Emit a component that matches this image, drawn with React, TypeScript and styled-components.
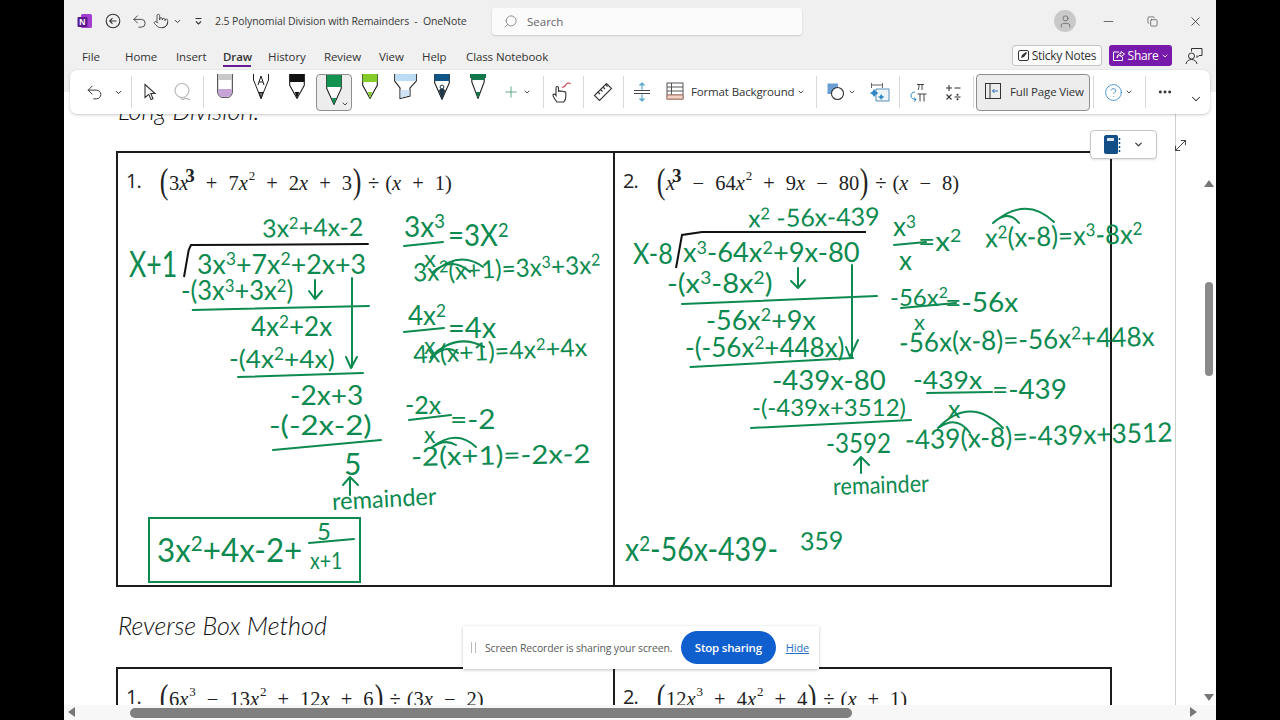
import React from 'react';
import styled, { createGlobalStyle } from 'styled-components';
import { ChevronDown, Minus, Copy, X, Search, MoreHorizontal, Plus, Pointer, Undo2, CircleHelp, User, MoveDiagonal } from 'lucide-react';

const INK = '#0d8a50';
const HEADER_H = 92;

const GlobalStyle = createGlobalStyle`
  html, body { margin: 0; padding: 0; background: #000; }
  body { font-family: "Open Sans", "Liberation Sans", sans-serif; }
  * { box-sizing: border-box; }
`;

const Stage = styled.div`
  width: 1280px;
  height: 720px;
  padding: 0 64px;
  background: #000;
  overflow: hidden;
`;

const Window = styled.div`
  position: relative;
  width: 1152px;
  height: 720px;
  display: flex;
  flex-direction: column;
  background: #fff;
  overflow: hidden;
`;

const Header = styled.header`
  height: ${HEADER_H}px;
  flex: none;
  background: #f0f0f0;
`;

const TitleBar = styled.div`
  height: 42px;
  display: flex;
  align-items: center;
  padding-left: 13px;
  color: #333;
`;

const Slot = styled.div<{ $w: number; $ml?: number }>`
  width: ${p => p.$w}px;
  margin-left: ${p => p.$ml || 0}px;
  flex: none;
  display: flex;
  align-items: center;
  justify-content: center;
`;

const DocTitle = styled.div`
  width: 280px;
  padding-left: 3px;
  font-size: 10.5px;
  color: #3a3a3a;
  letter-spacing: -0.1px;
  white-space: nowrap;
`;

const SearchBox = styled.div`
  width: 310px;
  height: 27px;
  display: flex;
  align-items: center;
  gap: 9px;
  padding-left: 11px;
  background: #fbfbfb;
  border-radius: 3px;
  box-shadow: 0 1px 2px rgba(0, 0, 0, 0.16);
  font-size: 11.5px;
  color: #666;
`;

const Avatar = styled.div`
  width: 22px;
  height: 22px;
  margin: 0 10px 0 auto;
  border-radius: 50%;
  background: #c9c9c9;
  display: flex;
  align-items: center;
  justify-content: center;
  color: #6a6a6a;
`;

const TabBar = styled.div`
  height: 28px;
  display: flex;
  align-items: center;
  padding-left: 18px;
`;

const Tab = styled.div<{ $w: number; $active?: boolean }>`
  position: relative;
  width: ${p => p.$w}px;
  flex: none;
  font-size: 11.5px;
  letter-spacing: -0.1px;
  font-weight: ${p => (p.$active ? 600 : 400)};
  color: #333;
  white-space: nowrap;
  ${p =>
    p.$active &&
    `&::after { content: ""; position: absolute; left: 0; width: 28px; bottom: -3px; height: 2px; background: #6a1b9a; }`}
`;

const StickyButton = styled.button`
  width: 90px;
  height: 21px;
  margin: -1px 7px 0 auto;
  padding: 0;
  display: flex;
  align-items: center;
  justify-content: center;
  gap: 3px;
  border: 1px solid #c4c4c4;
  border-radius: 3px;
  background: #fbfbfb;
  font: 12px "Open Sans", sans-serif;
  letter-spacing: -0.3px;
  color: #333;
`;

const ShareButton = styled.button`
  width: 63px;
  height: 21px;
  margin-top: -1px;
  padding: 0;
  display: flex;
  align-items: center;
  justify-content: center;
  gap: 3px;
  border: none;
  border-radius: 3px;
  background: #7719aa;
  font: 12px "Open Sans", sans-serif;
  letter-spacing: -0.3px;
  color: #fff;
`;

const Ribbon = styled.div`
  position: absolute;
  top: 70px;
  left: 6px;
  right: 6px;
  height: 44px;
  padding-left: 10px;
  display: flex;
  align-items: center;
  background: #fff;
  border-radius: 7px;
  box-shadow: 0 1px 3px rgba(0, 0, 0, 0.22);
  z-index: 5;
`;

const Tool = styled.div<{ $w: number; $selected?: boolean }>`
  position: relative;
  width: ${p => p.$w}px;
  height: 37px;
  flex: none;
  display: flex;
  align-items: center;
  justify-content: center;
  color: #333;
  ${p => p.$selected && `background: #ededed; border: 1px solid #8f8f8f; border-radius: 4px;`}
`;

const PenSlot = styled(Tool)`
  align-items: flex-start;
`;

const PenCaret = styled.span`
  position: absolute;
  right: 2px;
  bottom: 2px;
  display: flex;
`;

const Separator = styled.div<{ $w: number }>`
  width: ${p => p.$w}px;
  height: 32px;
  flex: none;
  position: relative;
  &::after {
    content: "";
    position: absolute;
    left: 50%;
    top: 0;
    bottom: 0;
    width: 1px;
    background: #d8d8d8;
  }
`;

const Spacer = styled.div<{ $w: number }>`
  width: ${p => p.$w}px;
  flex: none;
`;

const LabelTool = styled.div`
  display: flex;
  align-items: center;
  gap: 7px;
  margin-left: 10px;
  padding-bottom: 2px;
  flex: none;
  font-size: 11.5px;
  letter-spacing: -0.15px;
  color: #333;
  white-space: nowrap;
`;

const FormatText = styled.span`
  width: 104px;
`;

const FullPageButton = styled.div`
  width: 114px;
  height: 37px;
  flex: none;
  display: flex;
  align-items: center;
  gap: 9px;
  padding: 0 0 2px 8px;
  background: #ededed;
  border: 1px solid #8f8f8f;
  border-radius: 4px;
  font-size: 11.5px;
  letter-spacing: -0.15px;
  color: #333;
  white-space: nowrap;
`;

const CollapseSlot = styled.div`
  margin: 14px 7px 0 auto;
  color: #333;
  display: flex;
`;

const Content = styled.div`
  flex: 1;
  min-height: 0;
  display: grid;
  grid-template-columns: 1fr 16px;
  grid-template-rows: 1fr 15px;
`;

const Canvas = styled.main`
  position: relative;
  overflow: hidden;
  background: #fff;
`;

const Page = styled.div`
  width: 1112px;
  height: 100%;
  padding-left: 52px;
  border-right: 1px solid #cfcfcf;
  overflow: hidden;
`;

const SectionTitle = styled.h2<{ $top: number; $bottom: number }>`
  height: 30px;
  margin: ${p => p.$top}px 0 ${p => p.$bottom}px 2px;
  font: italic 300 25.2px/30px Lato, sans-serif;
  color: #111;
  white-space: nowrap;
`;

const ProblemTable = styled.div<{ $height: number }>`
  width: 996px;
  height: ${p => p.$height}px;
  flex: none;
  display: grid;
  grid-template-columns: 497px 1fr;
  border: 2px solid #1c1c1c;
`;

const Cell = styled.div`
  display: flex;
  align-items: flex-start;
  height: 100%;
  padding: 13px 0 0 8px;
  &:first-child { border-right: 2px solid #1c1c1c; }
`;

const ProblemNumber = styled.div`
  width: 33px;
  font: 20px/30px "Open Sans", sans-serif;
  letter-spacing: -1px;
  color: #222;
`;

const MathLine = styled.div`
  height: 30px;
  font: 20.5px/30px "Liberation Serif", serif;
  color: #222;
  white-space: nowrap;
`;

const BigParen = styled.span`
  display: inline-block;
  font: 300 36px/30px "Liberation Serif", serif;
  vertical-align: -3px;
  transform: scaleX(0.72);
  margin: 0 -1px;
`;

const Var = styled.i``;

const MathSup = styled.sup<{ $inked?: boolean }>`
  font-size: ${p => (p.$inked ? 19 : 13)}px;
  font-weight: ${p => (p.$inked ? 700 : 400)};
  line-height: 0;
  vertical-align: ${p => (p.$inked ? 8 : 10)}px;
  margin-left: ${p => (p.$inked ? -3 : 1)}px;
`;

const Op = styled.span<{ $gap?: number }>`
  margin: 0 ${p => p.$gap ?? 11}px;
`;

const InkLayer = styled.div`
  position: absolute;
  inset: 0;
  pointer-events: none;
`;

const InkDrawing = styled.svg`
  position: absolute;
  left: 0;
  top: 0;
`;

const InkText = styled.span<{ $x: number; $y: number; $s: number; $r: number; $sx: number }>`
  position: absolute;
  left: ${p => p.$x - 64}px;
  top: ${p => p.$y - HEADER_H}px;
  font: 400 ${p => p.$s}px/1 Lato, "Open Sans", sans-serif;
  color: ${INK};
  white-space: nowrap;
  transform-origin: left center;
  transform: translateY(-50%) rotate(${p => p.$r}deg) scaleX(${p => p.$sx});
`;

const InkSup = styled.span`
  font-size: 0.66em;
  line-height: 0;
  vertical-align: 0.48em;
`;

const NotebookChip = styled.div`
  position: absolute;
  left: 1026px;
  top: 38px;
  width: 67px;
  height: 29px;
  display: flex;
  align-items: center;
  justify-content: center;
  gap: 12px;
  background: #fff;
  border: 1px solid #c8c8c8;
  border-radius: 4px;
  box-shadow: 0 1px 2px rgba(0, 0, 0, 0.12);
  color: #333;
`;

const ExpandButton = styled.div`
  position: absolute;
  left: 1108px;
  top: 45px;
  display: flex;
  color: #333;
`;

const VScroll = styled.div`
  position: relative;
  background: #fff;
`;

const VThumb = styled.div`
  position: absolute;
  left: 5px;
  top: 190px;
  width: 8px;
  height: 94px;
  border-radius: 4px;
  background: #8a8a8a;
`;

const ArrowGlyph = styled.div<{ $dir: 'up' | 'down' | 'left' | 'right' }>`
  position: absolute;
  width: 0;
  height: 0;
  ${p =>
    p.$dir === 'up' &&
    `left: 4px; top: 88px; border: 5px solid transparent; border-top: 0; border-bottom: 7px solid #777;`}
  ${p =>
    p.$dir === 'down' &&
    `left: 4px; bottom: 4px; border: 5px solid transparent; border-bottom: 0; border-top: 7px solid #777;`}
  ${p =>
    p.$dir === 'left' &&
    `left: 4px; top: 2px; border: 5px solid transparent; border-left: 0; border-right: 7px solid #777;`}
  ${p =>
    p.$dir === 'right' &&
    `right: 19px; top: 2px; border: 5px solid transparent; border-right: 0; border-left: 7px solid #777;`}
`;

const HScroll = styled.div`
  grid-column: 1 / 3;
  position: relative;
  background: #f7f7f7;
`;

const HThumb = styled.div`
  position: absolute;
  left: 66px;
  top: 3px;
  width: 722px;
  height: 10px;
  border-radius: 5px;
  background: #7f7f7f;
`;

const RecorderBar = styled.div`
  position: absolute;
  left: 399px;
  top: 626px;
  width: 356px;
  height: 43px;
  display: flex;
  align-items: center;
  padding-left: 8px;
  background: #fff;
  box-shadow: 0 1px 3px rgba(0, 0, 0, 0.25);
  font-size: 10.5px;
  color: #5a5a5a;
  letter-spacing: -0.15px;
  white-space: nowrap;
  z-index: 6;
`;

const Grip = styled.span`
  width: 5px;
  height: 11px;
  margin-right: 9px;
  border-left: 1px solid #bbb;
  border-right: 1px solid #bbb;
`;

const StopButton = styled.button`
  width: 95px;
  height: 33px;
  margin: -1px 0 0 auto;
  padding: 0;
  border: none;
  border-radius: 17px;
  background: #0f5fcf;
  color: #fff;
  font: 600 11.5px "Open Sans", sans-serif;
  letter-spacing: -0.2px;
`;

const HideLink = styled.a`
  margin: 0 10px;
  font-size: 11px;
  color: #2a6fc9;
  text-decoration: underline;
`;

/* ---- icons ---- */

const Caret = ({ size = 9 }: { size?: number }) => <ChevronDown size={size} strokeWidth={2.6} />;

const NoteLogo = () => (
  <svg width="16" height="16" viewBox="0 0 16 16">
    <rect x="4" y="1" width="11" height="14" rx="1.5" fill="#a33fd0" />
    <rect x="0.5" y="4" width="10" height="10" rx="1" fill="#5b1a8e" />
    <text x="2.2" y="12" fontSize="8.5" fontWeight="700" fill="#fff" fontFamily="Liberation Sans">N</text>
  </svg>
);

const BackCircle = () => (
  <svg width="16" height="16" viewBox="0 0 16 16" fill="none" stroke="#333" strokeWidth="1.1">
    <circle cx="8" cy="8" r="6.8" />
    <path d="M11.5 8H4.8M7.5 5.2 4.7 8l2.8 2.8" />
  </svg>
);

const DropGlyph = () => (
  <svg width="9" height="9" viewBox="0 0 9 9" fill="none" stroke="#333" strokeWidth="1.1">
    <path d="M1.5 1.5h6M2 4.5l2.5 2.5L7 4.5" />
  </svg>
);

const StickyIcon = () => (
  <svg width="11" height="11" viewBox="0 0 11 11">
    <rect x="0.5" y="0.5" width="10" height="10" rx="1.5" fill="none" stroke="#333" />
    <path d="M3 8l1-3 4-3 1 1-3 4z" fill="#333" />
  </svg>
);

const ShareIcon = () => (
  <svg width="13" height="12" viewBox="0 0 13 12" fill="none" stroke="#fff" strokeWidth="1">
    <path d="M7 2H1.5v8.5h9V7M5 8c0-3 2-4.5 4-4.5V1.5L12.5 4 9 7V5.3C7 5.3 5.8 6.3 5 8z" />
  </svg>
);

const FeedbackIcon = () => (
  <svg width="18" height="18" viewBox="0 0 18 18" fill="none" stroke="#333" strokeWidth="1">
    <circle cx="6.5" cy="9" r="3" />
    <path d="M1 17c.6-3 2.6-4.5 5.500-4.500S11.400 14 12 17M6.500 4.500V1.500H17v7h-3l-2 2V8.500" />
  </svg>
);

const CursorIcon = () => (
  <svg width="16" height="18" viewBox="0 0 16 18" fill="#fff" stroke="#333" strokeWidth="1.1">
    <path d="M3 1.500 13 10.500H8.800L11 15.800 9 16.600 6.800 11.300 3 14.500z" />
  </svg>
);

const LassoIcon = () => (
  <svg width="20" height="20" viewBox="0 0 20 20" fill="none" stroke="#b5b5b5" strokeWidth="1.1">
    <circle cx="9" cy="8.500" r="7" />
    <path d="M8 15c-.500 2 1 3 2.500 2s3.500-1 6.500 1" />
  </svg>
);

type PenProps = { band: string; tip: string; bandH?: number; h?: number };

const BallPen = ({ band, tip, bandH = 8, h = 25 }: PenProps) => (
  <svg width="16" height={h} viewBox={`0 0 16 ${h}`} fill="none">
    <path d={`M.7 0V${h * 0.45}L8 ${h - 0.6} 15.300 ${h * 0.45}V0z`} fill="#fff" stroke="#1d1d1d" strokeWidth="1.100" />
    <rect x="0.700" y="0" width="14.600" height={bandH} fill={band} />
    <path d={`M5.800 ${h - 7} 8 ${h - 0.4} 10.200 ${h - 7}z`} fill={tip} />
  </svg>
);

const EraserPen = () => (
  <svg width="16" height="24" viewBox="0 0 16 24">
    <path d="M.7 0H15.300V18C15.300 21 13 23.300 11 23.300H5C3 23.300 .7 21 .7 18z" fill="#fff" stroke="#333" strokeWidth="1" />
    <rect x="1" y="0" width="14" height="6" fill="#c9c9c9" />
    <path d="M1.200 15H14.800V18C14.800 21 12.800 22.800 11 22.800H5C3.200 22.800 1.200 21 1.200 18z" fill="#c7a2d6" />
  </svg>
);

const PencilPen = () => (
  <svg width="18" height="25" viewBox="0 0 18 25" fill="none" stroke="#1d1d1d" strokeWidth="1">
    <path d="M1.500 0V6L9 24.500 16.500 6V0" fill="#fff" />
    <path d="M6 11 9 2 12 11M7 8H11" />
    <path d="M7 18.500 9 24.500 11 18.500z" fill="#777" />
  </svg>
);

const MarkerPen = () => (
  <svg width="23" height="25" viewBox="0 0 23 25">
    <path d="M.7 0V7L6 14V24.500L16 22V14L22.300 7V0z" fill="#fff" stroke="#1d1d1d" strokeWidth="1.100" />
    <path d="M1.200 0H21.800V7H1.200z" fill="#bcdcf5" />
    <path d="M6.500 16H15.500V21.500L6.500 24z" fill="#cfe3f5" />
  </svg>
);

const FountainPen = () => (
  <svg width="16" height="26" viewBox="0 0 16 26">
    <path d="M.7 0V9L8 25.300 15.300 9V0z" fill="#fff" stroke="#1d1d1d" strokeWidth="1.100" />
    <rect x="0.700" y="0" width="14.600" height="7" fill="#0f5588" />
    <path d="M4.800 16.500 8 25.500 11.200 16.500 8 13z" fill="#21384b" />
    <circle cx="8" cy="13" r="1.900" fill="#fff" stroke="#21384b" />
  </svg>
);

const FeltPen = () => (
  <svg width="16" height="25" viewBox="0 0 16 25">
    <path d="M1.800 0V8L8 24.400 14.200 8V0z" fill="#fff" stroke="#1d1d1d" strokeWidth="1.100" />
    <rect x="0" y="0" width="16" height="4" fill="#12774a" />
    <rect x="2" y="4" width="12" height="2" fill="#12774a" />
    <path d="M5.800 18 8 24.600 10.200 18z" fill="#12774a" />
  </svg>
);

const HandInk = () => (
  <svg width="22" height="24" viewBox="0 0 22 24" fill="none" stroke="#333" strokeWidth="1.100">
    <path d="M6 22c-1.500-2-4-5-4-7 0-1.500 2-1 3 .5V8c0-2 2.500-2 2.500 0v4c0-1.500 2.500-1.500 2.500 0 0-1.300 2.500-1.300 2.500.3 0-1 2.300-1 2.300.5v4c0 2-1 4-2 5.200z" />
    <path d="M11 7c2 1 3-1 4.500-3 1-1.300 3-1.500 4 0" stroke="#c2414b" />
  </svg>
);

const RulerIcon = () => (
  <svg width="20" height="20" viewBox="0 0 20 20" fill="none" stroke="#333" strokeWidth="1.100">
    <path d="M1.500 13.500 13.500 1.500 18.500 6.500 6.500 18.500z" />
    <path d="M5 10l2 2M7.500 7.500l2 2M10 5l2 2M12.500 2.500l2 2" />
  </svg>
);

const InsertSpaceIcon = () => (
  <svg width="18" height="20" viewBox="0 0 18 20" fill="none" stroke="#4aa3c7" strokeWidth="1.200">
    <path d="M9 7.500V1M6.500 3.500 9 1l2.500 2.500M9 12.500V19M6.500 16.500 9 19l2.500-2.500" />
    <path d="M1 8.500H17M1 11.500H17" stroke="#444" />
  </svg>
);

const TableIcon = () => (
  <svg width="18" height="18" viewBox="0 0 18 18" fill="none" stroke="#555" strokeWidth="1">
    <rect x="1" y="1" width="16" height="16" fill="#fff" />
    <path d="M1 5H17M1 9H17M1 13H17M5.500 1V17" />
    <path d="M1 13H17V17H1z" fill="#f3d2c5" stroke="#b07a68" />
  </svg>
);

const ShapesIcon = () => (
  <svg width="18" height="18" viewBox="0 0 18 18">
    <rect x="0.500" y="0.500" width="10.500" height="10.500" fill="#6b9fd4" />
    <circle cx="10.500" cy="10.500" r="6" fill="#fff" stroke="#333" strokeWidth="1.100" />
  </svg>
);

const ConvertIcon = () => (
  <svg width="20" height="20" viewBox="0 0 20 20" fill="none" stroke="#666" strokeWidth="1">
    <path d="M1 3H13M1.500 1V6M12.500 1V6" />
    <path d="M6 7H19V19H6z" stroke="#5a8fb5" fill="#eef5fa" />
    <path d="M4 7l2 2.500L8.500 11 6 12.500 4 15 2.500 12.500 0 11 2.500 9.500zM11 12l1.500 2 2 1-2 1-1.500 2-1-2-2-1 2-1z" fill="#2e87c4" stroke="none" />
  </svg>
);

const PiIcon = () => (
  <svg width="18" height="21" viewBox="0 0 18 21" fill="none" stroke="#444" strokeWidth="1">
    <path d="M7 2.500H14M9 2.500C9 5 8.800 7 8 8M12 2.500V8" />
    <path d="M7.500 12H16.500M10 12V19.500M14 12V19.500" />
    <path d="M5 10C2 10 1 12 1 14S3 17.500 6 17.500M4 15.500 6.200 17.500 4 19.500" stroke="#2e87c4" />
  </svg>
);

const OperatorsIcon = () => (
  <svg width="16" height="17" viewBox="0 0 16 17" fill="none" stroke="#333" strokeWidth="1.100">
    <path d="M4 1V7M1 4H7M9.500 4H15.500M1.500 10.500 6.500 15.500M6.500 10.500 1.500 15.500M9.500 13H15.500" />
    <circle cx="12.500" cy="10.800" r="0.500" />
    <circle cx="12.500" cy="15.200" r="0.500" />
  </svg>
);

const FullPageIcon = () => (
  <svg width="16" height="16" viewBox="0 0 16 16" fill="none" stroke="#333" strokeWidth="1">
    <rect x="0.500" y="0.500" width="15" height="15" />
    <path d="M5 1V15" />
    <path d="M13 8H7.500M9.500 6 7.500 8l2 2" stroke="#2a6fb5" />
  </svg>
);

const NotebookIcon = () => (
  <svg width="17" height="19" viewBox="0 0 17 19">
    <path d="M0 2C0 1 1 0 2 0H12.500C13.500 0 14 1 14 2V17C14 18 13.500 19 12.500 19H2C1 19 0 18 0 17z" fill="#114f86" />
    <rect x="3" y="3" width="7" height="3" rx="0.500" fill="#d8e6f2" />
    <path d="M15.500 3V5M15.500 7V9M15.500 11V13M15.500 15V17" stroke="#114f86" strokeWidth="1.500" />
  </svg>
);

/* ---- ink ---- */

type Write = [string, number, number, number, number?, number?];

const writes: Write[] = [
  // problem 1
  ['3x^2+4x-2', 262, 228, 25, -1],
  ['X+1', 129, 263, 36, 0, 0.74],
  ['3x^3+7x^2+2x+3', 197, 263, 27, 0, 0.99],
  ['-(3x^3+3x^2)', 181, 290, 26, 0, 0.98],
  ['4x^2+2x', 251, 326, 26],
  ['-(4x^2+4x)', 229, 358, 25, 0, 1.05],
  ['-2x+3', 290, 395, 26, 0, 1.08],
  ['-(-2x-2)', 269, 425, 26, 0, 1.2],
  ['5', 344, 463, 30],
  ['remainder', 332, 501, 24, -3, 0.98],
  ['3x^3', 404, 226, 28],
  ['x', 424, 258, 24],
  ['=3X^2', 448, 234, 30, 0, 0.92],
  ['3x^2(x+1)=3x^3+3x^2', 413, 272, 25, -2.500, 0.97],
  ['4x^2', 408, 315, 26],
  ['x', 424, 345, 23],
  ['=4x', 448, 326, 29],
  ['4x(x+1)=4x^2+4x', 413, 354, 25, -2.500],
  ['-2x', 405, 404, 25],
  ['x', 424, 434, 23],
  ['=-2', 450, 418, 27, 0, 1.1],
  ['-2(x+1)=-2x-2', 411, 456, 26, -1, 1.13],
  ['3x^2+4x-2+', 157, 549, 33, 0, 0.95],
  ['5', 317, 531, 24],
  ['x+1', 310, 560, 23, 0, 0.85],
  // problem 2
  ['x^2 -56x-439', 748, 218, 25, -1],
  ['X-8', 633, 252, 29, 0, 0.87],
  ['x^3-64x^2+9x-80', 683, 252, 26, 0, 1.05],
  ['-(x^3-8x^2)', 667, 282, 27, 0, 1.08],
  ['-56x^2+9x', 706, 319, 27],
  ['-(-56x^2+448x)', 685, 347, 26],
  ['-439x-80', 772, 380, 26, 0, 1.06],
  ['-(-439x+3512)', 752, 407, 24],
  ['-3592', 826, 443, 26, 0, 0.93],
  ['remainder', 833, 486, 24, -2, 0.9],
  ['x^3', 893, 226, 26],
  ['x', 899, 260, 26],
  ['=x^2', 918, 240, 27, 0, 1.1],
  ['x^2(x-8)=x^3-8x^2', 985, 237, 27, -1.500, 0.95],
  ['-56x^2', 890, 297, 24],
  ['x', 914, 322, 22],
  ['=-56x', 945, 302, 26, 0, 1.08],
  ['-56x(x-8)=-56x^2+448x', 899, 342, 27, -1.500, 0.965],
  ['-439x', 913, 379, 25, 0, 1.06],
  ['x', 948, 408, 25],
  ['=-439', 992, 388, 27, 0, 1.03],
  ['-439(x-8)=-439x+3512', 905, 439, 27, -1.700, 0.975],
  ['x^2-56x-439-', 625, 549, 32, 0, 0.89],
  ['359', 800, 541, 25, -2],
];

const inkLines = [
  // problem 1
  'M192.700 310L369 306',
  'M352 278V367M346 357L351 368L357 357',
  'M315 280V299M309 291L315 299L322 291',
  'M404 246L443 242',
  'M434 272Q460 250 483 267M433 272Q452 256 470 272',
  'M404 332L444 328',
  'M431 357Q456 332 484 347M431 358Q446 343 458 353',
  'M238 377L363 373',
  'M409 420L451 415',
  'M431 448Q456 428 476 447M431 448Q444 438 456 445',
  'M273 450L381 440',
  'M350 495V478M343 485L350 477L358 485',
  'M309 543L354 539',
  // problem 2
  'M682 304L877 296',
  'M852 265V357M846 347L850 357L858 340',
  'M798 268V288M791 281L798 288L805 280',
  'M690.500 367L853 358',
  'M894 245L926 242',
  'M901 308L956 303',
  'M993 223Q1026 195 1054 222M993 223Q1008 209 1019 223',
  'M927 393L992 392',
  'M751 428L911 420',
  'M861 473V458M854 465L861 457L869 465',
  'M938 428Q970 395 1003 428M940 427Q957 415 970 433',
];

const renderInk = (text: string) =>
  text.split(/(\^\d)/).map((part, i) =>
    part.startsWith('^') ? <InkSup key={i}>{part[1]}</InkSup> : <React.Fragment key={i}>{part}</React.Fragment>
  );

const InkNotes = () => (
  <InkLayer>
    <InkDrawing width="1136" height="613" viewBox={`64 ${HEADER_H} 1136 613`} fill="none">
      <path d="M184 277L188.700 250 191 245 368.700 244" stroke="#111" strokeWidth="2" />
      <path d="M676 268L682 235 702 232 866 232" stroke="#111" strokeWidth="2" />
      {inkLines.map((d, i) => (
        <path key={i} d={d} stroke={INK} strokeWidth="2" strokeLinecap="round" strokeLinejoin="round" />
      ))}
      <rect x="149" y="518" width="211" height="64" stroke={INK} strokeWidth="2" />
    </InkDrawing>
    {writes.map(([text, x, y, size, rot = 0, sx = 1], i) => (
      <InkText key={i} $x={x} $y={y} $s={size} $r={rot} $sx={sx}>
        {renderInk(text)}
      </InkText>
    ))}
  </InkLayer>
);

const App = () => (
  <Stage>
    <GlobalStyle />
    <Window>
      <Header>
        <TitleBar>
          <Slot $w={16}><NoteLogo /></Slot>
          <Slot $w={26} $ml={7}><BackCircle /></Slot>
          <Slot $w={26}><Undo2 size={17} strokeWidth={1.2} /></Slot>
          <Slot $w={18}><Pointer size={16} strokeWidth={1.2} /></Slot>
          <Slot $w={14}><Caret /></Slot>
          <Slot $w={28}><DropGlyph /></Slot>
          <DocTitle>2.5 Polynomial Division with Remainders&nbsp; -&nbsp; OneNote</DocTitle>
          <SearchBox><Search size={15} strokeWidth={1.1} style={{ transform: 'scaleX(-1)' }} />Search</SearchBox>
          <Avatar><User size={15} strokeWidth={1.3} /></Avatar>
          <Slot $w={44}><Minus size={15} strokeWidth={1.1} /></Slot>
          <Slot $w={44}><Copy size={11} strokeWidth={1.3} /></Slot>
          <Slot $w={42}><X size={15} strokeWidth={1.3} /></Slot>
        </TitleBar>
        <TabBar>
          <Tab $w={43}>File</Tab>
          <Tab $w={51}>Home</Tab>
          <Tab $w={47}>Insert</Tab>
          <Tab $w={45} $active>Draw</Tab>
          <Tab $w={56}>History</Tab>
          <Tab $w={55}>Review</Tab>
          <Tab $w={43}>View</Tab>
          <Tab $w={44}>Help</Tab>
          <Tab $w={90}>Class Notebook</Tab>
          <StickyButton><StickyIcon />Sticky Notes</StickyButton>
          <ShareButton><ShareIcon />Share<Caret size={8} /></ShareButton>
          <Slot $w={44}><FeedbackIcon /></Slot>
        </TabBar>
      </Header>

      <Ribbon>
        <Tool $w={28}><Undo2 size={19} strokeWidth={1.2} /></Tool>
        <Tool $w={20}><Caret /></Tool>
        <Separator $w={6} />
        <Tool $w={32}><CursorIcon /></Tool>
        <Tool $w={34}><LassoIcon /></Tool>
        <Separator $w={6} />
        <PenSlot $w={38}><EraserPen /></PenSlot>
        <PenSlot $w={34}><PencilPen /></PenSlot>
        <PenSlot $w={38}><BallPen band="#111" tip="#111" /></PenSlot>
        <PenSlot $w={36} $selected>
          <BallPen band="#12934f" tip="#12934f" bandH={12} h={30} />
          <PenCaret><Caret size={8} /></PenCaret>
        </PenSlot>
        <PenSlot $w={35}><BallPen band="#84cc2a" tip="#84cc2a" /></PenSlot>
        <PenSlot $w={36}><MarkerPen /></PenSlot>
        <PenSlot $w={37}><FountainPen /></PenSlot>
        <PenSlot $w={35}><FeltPen /></PenSlot>
        <Spacer $w={4} />
        <Tool $w={24}><Plus size={18} strokeWidth={1.1} color="#3f9a6b" /></Tool>
        <Tool $w={8}><Caret size={8} /></Tool>
        <Spacer $w={9} />
        <Separator $w={6} />
        <Tool $w={32}><HandInk /></Tool>
        <Separator $w={10} />
        <Tool $w={30}><RulerIcon /></Tool>
        <Separator $w={10} />
        <Tool $w={28}><InsertSpaceIcon /></Tool>
        <LabelTool>
          <TableIcon />
          <FormatText>Format Background</FormatText>
        </LabelTool>
        <Tool $w={12}><Caret size={8} /></Tool>
        <Separator $w={17} />
        <Tool $w={24}><ShapesIcon /></Tool>
        <Tool $w={8}><Caret size={8} /></Tool>
        <Spacer $w={8} />
        <Tool $w={32}><ConvertIcon /></Tool>
        <Separator $w={6} />
        <Tool $w={34}><PiIcon /></Tool>
        <Tool $w={34}><OperatorsIcon /></Tool>
        <Separator $w={6} />
        <FullPageButton><FullPageIcon />Full Page View</FullPageButton>
        <Separator $w={6} />
        <Spacer $w={5} />
        <Tool $w={24}><CircleHelp size={19} strokeWidth={1} color="#2a7fc1" /></Tool>
        <Tool $w={8}><Caret size={8} /></Tool>
        <Separator $w={24} />
        <Tool $w={16}><MoreHorizontal size={16} strokeWidth={2.4} /></Tool>
        <CollapseSlot><ChevronDown size={14} strokeWidth={1.8} /></CollapseSlot>
      </Ribbon>

      <Content>
        <Canvas>
          <Page>
            <SectionTitle $top={3} $bottom={26}>Long Division:</SectionTitle>
            <ProblemTable $height={436}>
              <Cell>
                <ProblemNumber>1.</ProblemNumber>
                <MathLine>
                  <BigParen>(</BigParen>3<Var>x</Var><MathSup $inked>3</MathSup>
                  <Op>+</Op>7<Var>x</Var><MathSup>2</MathSup>
                  <Op>+</Op>2<Var>x</Var>
                  <Op>+</Op>3<BigParen>)</BigParen>
                  <Op $gap={6}>÷</Op>(<Var>x</Var><Op>+</Op>1)
                </MathLine>
              </Cell>
              <Cell>
                <ProblemNumber>2.</ProblemNumber>
                <MathLine>
                  <BigParen>(</BigParen><Var>x</Var><MathSup $inked>3</MathSup>
                  <Op>−</Op>64<Var>x</Var><MathSup>2</MathSup>
                  <Op>+</Op>9<Var>x</Var>
                  <Op>−</Op>80<BigParen>)</BigParen>
                  <Op $gap={6}>÷</Op>(<Var>x</Var><Op>−</Op>8)
                </MathLine>
              </Cell>
            </ProblemTable>
            <SectionTitle $top={23} $bottom={27}>Reverse Box Method</SectionTitle>
            <ProblemTable $height={200}>
              <Cell>
                <ProblemNumber>1.</ProblemNumber>
                <MathLine>
                  <BigParen>(</BigParen>6<Var>x</Var><MathSup>3</MathSup>
                  <Op>−</Op>13<Var>x</Var><MathSup>2</MathSup>
                  <Op>+</Op>12<Var>x</Var>
                  <Op>+</Op>6<BigParen>)</BigParen>
                  <Op $gap={6}>÷</Op>(3<Var>x</Var><Op>−</Op>2)
                </MathLine>
              </Cell>
              <Cell>
                <ProblemNumber>2.</ProblemNumber>
                <MathLine>
                  <BigParen>(</BigParen>12<Var>x</Var><MathSup>3</MathSup>
                  <Op>+</Op>4<Var>x</Var><MathSup>2</MathSup>
                  <Op>+</Op>4<BigParen>)</BigParen>
                  <Op $gap={6}>÷</Op>(<Var>x</Var><Op>+</Op>1)
                </MathLine>
              </Cell>
            </ProblemTable>
          </Page>
          <InkNotes />
          <NotebookChip><NotebookIcon /><Caret size={11} /></NotebookChip>
          <ExpandButton><MoveDiagonal size={17} strokeWidth={1.3} /></ExpandButton>
        </Canvas>
        <VScroll>
          <ArrowGlyph $dir="up" />
          <VThumb />
          <ArrowGlyph $dir="down" />
        </VScroll>
        <HScroll>
          <ArrowGlyph $dir="left" />
          <HThumb />
          <ArrowGlyph $dir="right" />
        </HScroll>
      </Content>

      <RecorderBar>
        <Grip />
        Screen Recorder is sharing your screen.
        <StopButton>Stop sharing</StopButton>
        <HideLink>Hide</HideLink>
      </RecorderBar>
    </Window>
  </Stage>
);

export default App;
